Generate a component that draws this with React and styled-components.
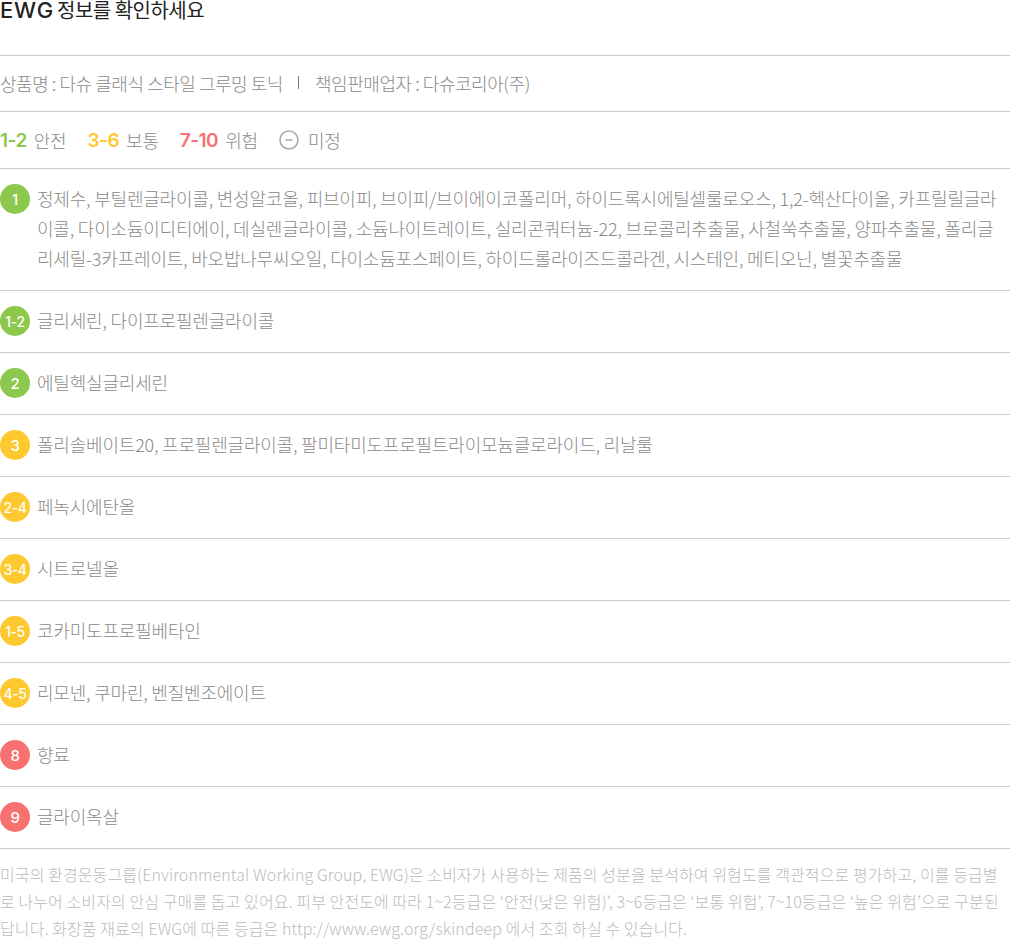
import React from "react";
import styled, { createGlobalStyle } from "styled-components";

const GlobalStyle = createGlobalStyle`
  html, body {
    margin: 0;
    padding: 0;
    background: #fff;
  }
  body {
    font-family: "Noto Sans CJK KR", "Noto Sans", sans-serif;
    font-weight: 300;
    color: #777;
  }
`;

const GREEN = "#8cc84b";
const YELLOW = "#fdc92f";
const RED = "#f87171";

const groups = [
  {
    grade: "1",
    color: GREEN,
    lines: [
      "정제수, 부틸렌글라이콜, 변성알코올, 피브이피, 브이피/브이에이코폴리머, 하이드록시에틸셀룰로오스, 1,2-헥산다이올, 카프릴릴글라",
      "이콜, 다이소듐이디티에이, 데실렌글라이콜, 소듐나이트레이트, 실리콘쿼터늄-22, 브로콜리추출물, 사철쑥추출물, 양파추출물, 폴리글",
      "리세릴-3카프레이트, 바오밥나무씨오일, 다이소듐포스페이트, 하이드롤라이즈드콜라겐, 시스테인, 메티오닌, 별꽃추출물",
    ],
  },
  { grade: "1-2", color: GREEN, lines: ["글리세린, 다이프로필렌글라이콜"] },
  { grade: "2", color: GREEN, lines: ["에틸헥실글리세린"] },
  { grade: "3", color: YELLOW, lines: ["폴리솔베이트20, 프로필렌글라이콜, 팔미타미도프로필트라이모늄클로라이드, 리날룰"] },
  { grade: "2-4", color: YELLOW, lines: ["페녹시에탄올"] },
  { grade: "3-4", color: YELLOW, lines: ["시트로넬올"] },
  { grade: "1-5", color: YELLOW, lines: ["코카미도프로필베타인"] },
  { grade: "4-5", color: YELLOW, lines: ["리모넨, 쿠마린, 벤질벤조에이트"] },
  { grade: "8", color: RED, lines: ["향료"] },
  { grade: "9", color: RED, lines: ["글라이옥살"] },
];

const Page = styled.div`
  width: 1010px;
  height: 950px;
  overflow: hidden;
`;

const Title = styled.h2`
  margin: 0;
  height: 55px;
  font-size: 20px;
  line-height: 20px;
  font-weight: 400;
  color: #222;
  letter-spacing: -0.5px;
  white-space: nowrap;
`;

const Latin = styled.span`
  font-family: "Inter", sans-serif;
  font-size: 22px;
  font-weight: 500;
  letter-spacing: 0.8px;
  margin-right: -1px;
`;

const Product = styled.div`
  height: 53px;
  padding-bottom: 2px;
  border-top: 1px solid #ccc;
  display: flex;
  align-items: center;
  font-size: 18px;
  letter-spacing: -0.45px;
  color: #8a8a8a;
  white-space: nowrap;
`;

const Divider = styled.span`
  width: 1px;
  height: 13px;
  background: #777;
  margin: 0 16px 0 15px;
`;

const Legend = styled.div`
  height: 56px;
  border-top: 1px solid #ccc;
  display: flex;
  align-items: center;
  font-size: 18px;
  letter-spacing: -0.2px;
  color: #8a8a8a;
`;

const LegendItem = styled.div`
  display: flex;
  align-items: center;
  gap: 7px;
  margin-right: 21px;
`;

const Range = styled.span`
  font-family: "Inter", sans-serif;
  font-size: 19px;
  font-weight: 600;
  letter-spacing: -0.5px;
  color: ${(p) => p.$color};
`;

const MinusCircle = styled.svg`
  width: 20px;
  height: 20px;
  margin-right: 2px;
  display: block;
`;

const Group = styled.div`
  border-top: 1px solid #ccc;
  display: flex;
  align-items: flex-start;
  gap: 7px;
  padding: 15px 0 16px;
`;

const Badge = styled.span`
  flex: none;
  width: 30px;
  height: 30px;
  border-radius: 50%;
  background: ${(p) => p.$color};
  color: #fff;
  display: flex;
  align-items: center;
  justify-content: center;
  font-family: "Inter", sans-serif;
  font-size: ${(p) => (p.$wide ? 14 : 15)}px;
  font-weight: 500;
  letter-spacing: -0.4px;
`;

const Names = styled.div`
  margin: -1px 0 1px;
  font-size: 18px;
  line-height: 30px;
  letter-spacing: -0.2px;
  color: #8a8a8a;
  white-space: nowrap;
`;

const Note = styled.p`
  margin: 0;
  border-top: 1px solid #ccc;
  padding-top: 12px;
  font-size: 16px;
  line-height: 27px;
  letter-spacing: 0.1px;
  color: #bbb;
  white-space: nowrap;
`;

export default function App() {
  return (
    <Page>
      <GlobalStyle />
      <Title>
        <Latin>EWG</Latin> 정보를 확인하세요
      </Title>
      <Product>
        상품명 : 다슈 클래식 스타일 그루밍 토닉
        <Divider />
        책임판매업자 : 다슈코리아(주)
      </Product>
      <Legend>
        <LegendItem>
          <Range $color={GREEN}>1-2</Range> 안전
        </LegendItem>
        <LegendItem>
          <Range $color={YELLOW}>3-6</Range> 보통
        </LegendItem>
        <LegendItem>
          <Range $color={RED}>7-10</Range> 위험
        </LegendItem>
        <LegendItem>
          <MinusCircle viewBox="0 0 20 20">
            <circle cx="10" cy="10" r="9" fill="none" stroke="#aaa" strokeWidth="1.6" />
            <path d="M6.5 10h7" stroke="#aaa" strokeWidth="1.5" />
          </MinusCircle>
          미정
        </LegendItem>
      </Legend>
      {groups.map((g) => (
        <Group key={g.grade}>
          <Badge $color={g.color} $wide={g.grade.length > 1}>
            {g.grade}
          </Badge>
          <Names>
            {g.lines.map((l) => (
              <div key={l}>{l}</div>
            ))}
          </Names>
        </Group>
      ))}
      <Note>
        미국의 환경운동그룹(Environmental Working Group, EWG)은 소비자가 사용하는 제품의 성분을 분석하여 위험도를 객관적으로 평가하고, 이를 등급별
        <br />
        로 나누어 소비자의 안심 구매를 돕고 있어요. 피부 안전도에 따라 1~2등급은 ‘안전(낮은 위험)’, 3~6등급은 ‘보통 위험’, 7~10등급은 ‘높은 위험’으로 구분된
        <br />
        답니다. 화장품 재료의 EWG에 따른 등급은 http://www.ewg.org/skindeep 에서 조회 하실 수 있습니다.
      </Note>
    </Page>
  );
}
